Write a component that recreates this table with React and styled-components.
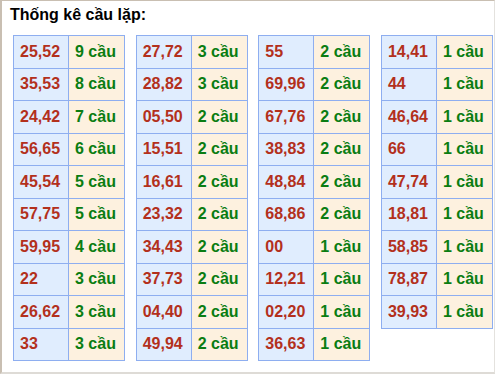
import React from 'react';
import styled, { createGlobalStyle } from 'styled-components';

const GlobalStyle = createGlobalStyle`
  html, body {
    margin: 0;
    padding: 0;
    background: #fff;
  }
  body {
    font-family: "Liberation Sans", Arial, sans-serif;
  }
`;

const Box = styled.div`
  box-sizing: border-box;
  width: 495px;
  height: 374px;
  border-top: 1px solid #c9bfb2;
  border-left: 2px solid #c9bfb2;
  border-right: 1px solid #e4e2de;
  border-bottom: 2px solid #dedbd6;
  padding: 4px 0 0 8px;
`;

const Title = styled.h2`
  margin: 0;
  font-size: 16px;
  font-weight: bold;
  line-height: 19px;
  color: #000;
`;

const Grid = styled.div`
  display: grid;
  grid-template-columns: repeat(4, 111px);
  column-gap: 11.67px;
  align-items: start;
  margin: 11px 0 0 3px;
`;

const StyledTable = styled.table`
  border-collapse: collapse;
  width: 111px;
  table-layout: fixed;
`;

const StyledRow = styled.tr`
  height: 32.5px;
`;

const NumCell = styled.td`
  box-sizing: border-box;
  width: 55px;
  padding: 0 0 0 6px;
  border: 1px solid #8eaef0;
  background: #e0edfe;
  color: #b3301c;
  font-size: 16px;
  font-weight: bold;
  white-space: nowrap;
`;

const CountCell = styled.td`
  box-sizing: border-box;
  width: 56px;
  padding: 0 0 0 6px;
  border: 1px solid #8eaef0;
  background: #fdf1df;
  color: #0a7d12;
  font-size: 16px;
  font-weight: bold;
  white-space: nowrap;
`;

const columns = [
  [
    ['25,52', 9], ['35,53', 8], ['24,42', 7], ['56,65', 6], ['45,54', 5],
    ['57,75', 5], ['59,95', 4], ['22', 3], ['26,62', 3], ['33', 3],
  ],
  [
    ['27,72', 3], ['28,82', 3], ['05,50', 2], ['15,51', 2], ['16,61', 2],
    ['23,32', 2], ['34,43', 2], ['37,73', 2], ['04,40', 2], ['49,94', 2],
  ],
  [
    ['55', 2], ['69,96', 2], ['67,76', 2], ['38,83', 2], ['48,84', 2],
    ['68,86', 2], ['00', 1], ['12,21', 1], ['02,20', 1], ['36,63', 1],
  ],
  [
    ['14,41', 1], ['44', 1], ['46,64', 1], ['66', 1], ['47,74', 1],
    ['18,81', 1], ['58,85', 1], ['78,87', 1], ['39,93', 1],
  ],
];

const App = () => {
  return (
    <>
      <GlobalStyle />
      <Box>
        <Title>Thống kê cầu lặp:</Title>
        <Grid>
          {columns.map((rows, i) => (
            <StyledTable key={i}>
              <tbody>
                {rows.map(([pair, count]) => (
                  <StyledRow key={pair}>
                    <NumCell>{pair}</NumCell>
                    <CountCell>{count} cầu</CountCell>
                  </StyledRow>
                ))}
              </tbody>
            </StyledTable>
          ))}
        </Grid>
      </Box>
    </>
  );
};

export default App;
